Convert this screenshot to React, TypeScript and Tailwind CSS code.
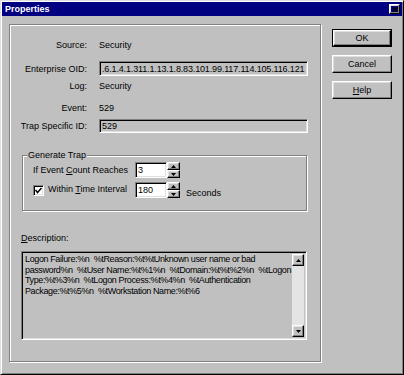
import type { ReactNode } from "react";

const raised =
  "border border-t-white border-l-white border-r-black border-b-black shadow-[inset_-1px_-1px_0_#808080,inset_1px_1px_0_#dfdfdf]";
const sunken =
  "border border-t-[#808080] border-l-[#808080] border-r-white border-b-white shadow-[inset_1px_1px_0_#000,inset_-1px_-1px_0_#dfdfdf]";
const etched = "border border-[#808080] shadow-[inset_1px_1px_0_#fff,1px_1px_0_#fff]";

function Arrow({ dir }: { dir: "up" | "down" }) {
  return (
    <svg width="5" height="3" viewBox="0 0 5 3">
      {dir === "up" ? <path d="M2.5 0 L5 3 L0 3 Z" fill="#000" /> : <path d="M0 0 L5 0 L2.5 3 Z" fill="#000" />}
    </svg>
  );
}

function SpinEdit({ value }: { value: string }) {
  return (
    <div className="flex h-[16px]">
      <div className={`${sunken} w-[32px] h-full bg-white pl-[2px] flex items-center`}>{value}</div>
      <div className="flex flex-col w-[13px] h-full">
        <div className={`${raised} h-[8px] flex items-center justify-center`}>
          <Arrow dir="up" />
        </div>
        <div className={`${raised} h-[8px] flex items-center justify-center`}>
          <Arrow dir="down" />
        </div>
      </div>
    </div>
  );
}

function Row({ label, children, className }: { label: string; children: ReactNode; className: string }) {
  return (
    <div className={`flex items-center ${className}`}>
      <div className="w-[77px] text-right">{label}</div>
      <div className="ml-[12px] flex-1 flex items-center h-full">{children}</div>
    </div>
  );
}

function Button({ children, isDefault }: { children: ReactNode; isDefault?: boolean }) {
  if (isDefault) {
    return (
      <div className="w-[60px] h-[18px] border border-black">
        <div className={`${raised} w-full h-full flex items-center justify-center`}>{children}</div>
      </div>
    );
  }
  return <div className={`${raised} w-[60px] h-[18px] flex items-center justify-center`}>{children}</div>;
}

const descLines = [
  "Logon Failure:%n  %tReason:%t%tUnknown user name or bad",
  "password%n  %tUser Name:%t%1%n  %tDomain:%t%t%2%n  %tLogon",
  "Type:%t%3%n  %tLogon Process:%t%4%n  %tAuthentication",
  "Package:%t%5%n  %tWorkstation Name:%t%6",
];

export default function App() {
  return (
    <div
      className="w-[404px] h-[375px] bg-[#c0c0c0] text-black text-[9px] leading-[12px] border border-t-[#dfdfdf] border-l-[#dfdfdf] border-r-black border-b-black shadow-[inset_1px_1px_0_#fff,inset_-1px_-1px_0_#808080] p-[1px] flex flex-col"
      style={{ fontFamily: '"Liberation Sans", Arial, sans-serif' }}
    >
      {/* Title bar */}
      <div className="h-[14px] bg-[#000080] flex items-center pl-[3px] pr-[2px]">
        <span className="text-white font-bold text-[9px]">Properties</span>
        <div className={`${raised} ml-auto w-[11px] h-[10px] flex items-center justify-center`}>
          <svg width="6" height="5" viewBox="0 0 6 5">
            <path d="M0.5 0.5 L5.5 4.5 M5.5 0.5 L0.5 4.5" stroke="#000" strokeWidth="1.4" />
          </svg>
        </div>
      </div>

      <div className="flex pl-[7px] pt-[8px]">
        {/* Main panel */}
        <div className={`${etched} w-[312px] h-[338px] flex flex-col`}>
          <Row label="Source:" className="mt-[13px] h-[14px]">
            <span>Security</span>
          </Row>
          <Row label="Enterprise OID:" className="mt-[9px] h-[15px]">
            <div className={`${sunken} w-[209px] h-full pl-[2px] flex items-center overflow-hidden whitespace-nowrap tracking-[-0.15px]`}>
              .6.1.4.1.311.1.13.1.8.83.101.99.117.114.105.116.121
            </div>
          </Row>
          <Row label="Log:" className="mt-[3px] h-[14px]">
            <span>Security</span>
          </Row>
          <Row label="Event:" className="mt-[8px] h-[14px]">
            <span>529</span>
          </Row>
          <Row label="Trap Specific ID:" className="mt-[4px] h-[14px]">
            <div className={`${sunken} w-[209px] h-full pl-[2px] flex items-center`}>529</div>
          </Row>

          {/* Generate Trap group */}
          <div className={`${etched} mt-[22px] ml-[12px] w-[285px] h-[56px] flex flex-col`}>
            <span className="-mt-[7px] ml-[4px] px-[1px] w-fit h-[12px] bg-[#c0c0c0]">Generate Trap</span>
            <div className="mt-[1px] pl-[10px] flex items-center h-[16px]">
              <div className="w-[102px]">
                If Event <span className="underline">C</span>ount Reaches
              </div>
              <SpinEdit value="3" />
            </div>
            <div className="mt-[4px] pl-[10px] flex items-center h-[16px]">
              <div className="w-[102px] flex items-center">
                <div className={`${sunken} w-[11px] h-[11px] bg-white flex items-center justify-center`}>
                  <svg width="7" height="7" viewBox="0 0 7 7">
                    <path d="M0.5 3 L2.5 5.5 L6.5 1" stroke="#000" strokeWidth="1.5" fill="none" />
                  </svg>
                </div>
                <span className="ml-[4px] -mt-[2px]">
                  Within <span className="underline">T</span>ime Interval
                </span>
              </div>
              <SpinEdit value="180" />
              <span className="ml-[6px] self-end -mb-[1px]">Seconds</span>
            </div>
          </div>

          <div className="mt-[21px] ml-[11px] h-[12px]">
            <span className="underline">D</span>escription:
          </div>

          {/* Description box */}
          <div className={`${sunken} mt-[7px] ml-[11px] w-[286px] h-[89px] flex p-[2px]`}>
            <div className="flex-1 min-w-0 overflow-hidden pl-[1px] leading-[10.5px] whitespace-pre tracking-[-0.38px]">
              {descLines.map((l) => (
                <div key={l}>{l}</div>
              ))}
            </div>
            <div className="w-[12px] shrink-0 h-full flex flex-col">
              <div className={`${raised} h-[12px] flex items-center justify-center`}>
                <Arrow dir="up" />
              </div>
              <div className="flex-1 bg-[#e4e4e4]" />
              <div className={`${raised} h-[12px] flex items-center justify-center`}>
                <Arrow dir="down" />
              </div>
            </div>
          </div>
        </div>

        {/* Buttons */}
        <div className="ml-[11px] mt-[5px] flex flex-col gap-[8px]">
          <Button isDefault>OK</Button>
          <Button>Cancel</Button>
          <Button>
            <span>
              <span className="underline">H</span>elp
            </span>
          </Button>
        </div>
      </div>
    </div>
  );
}
